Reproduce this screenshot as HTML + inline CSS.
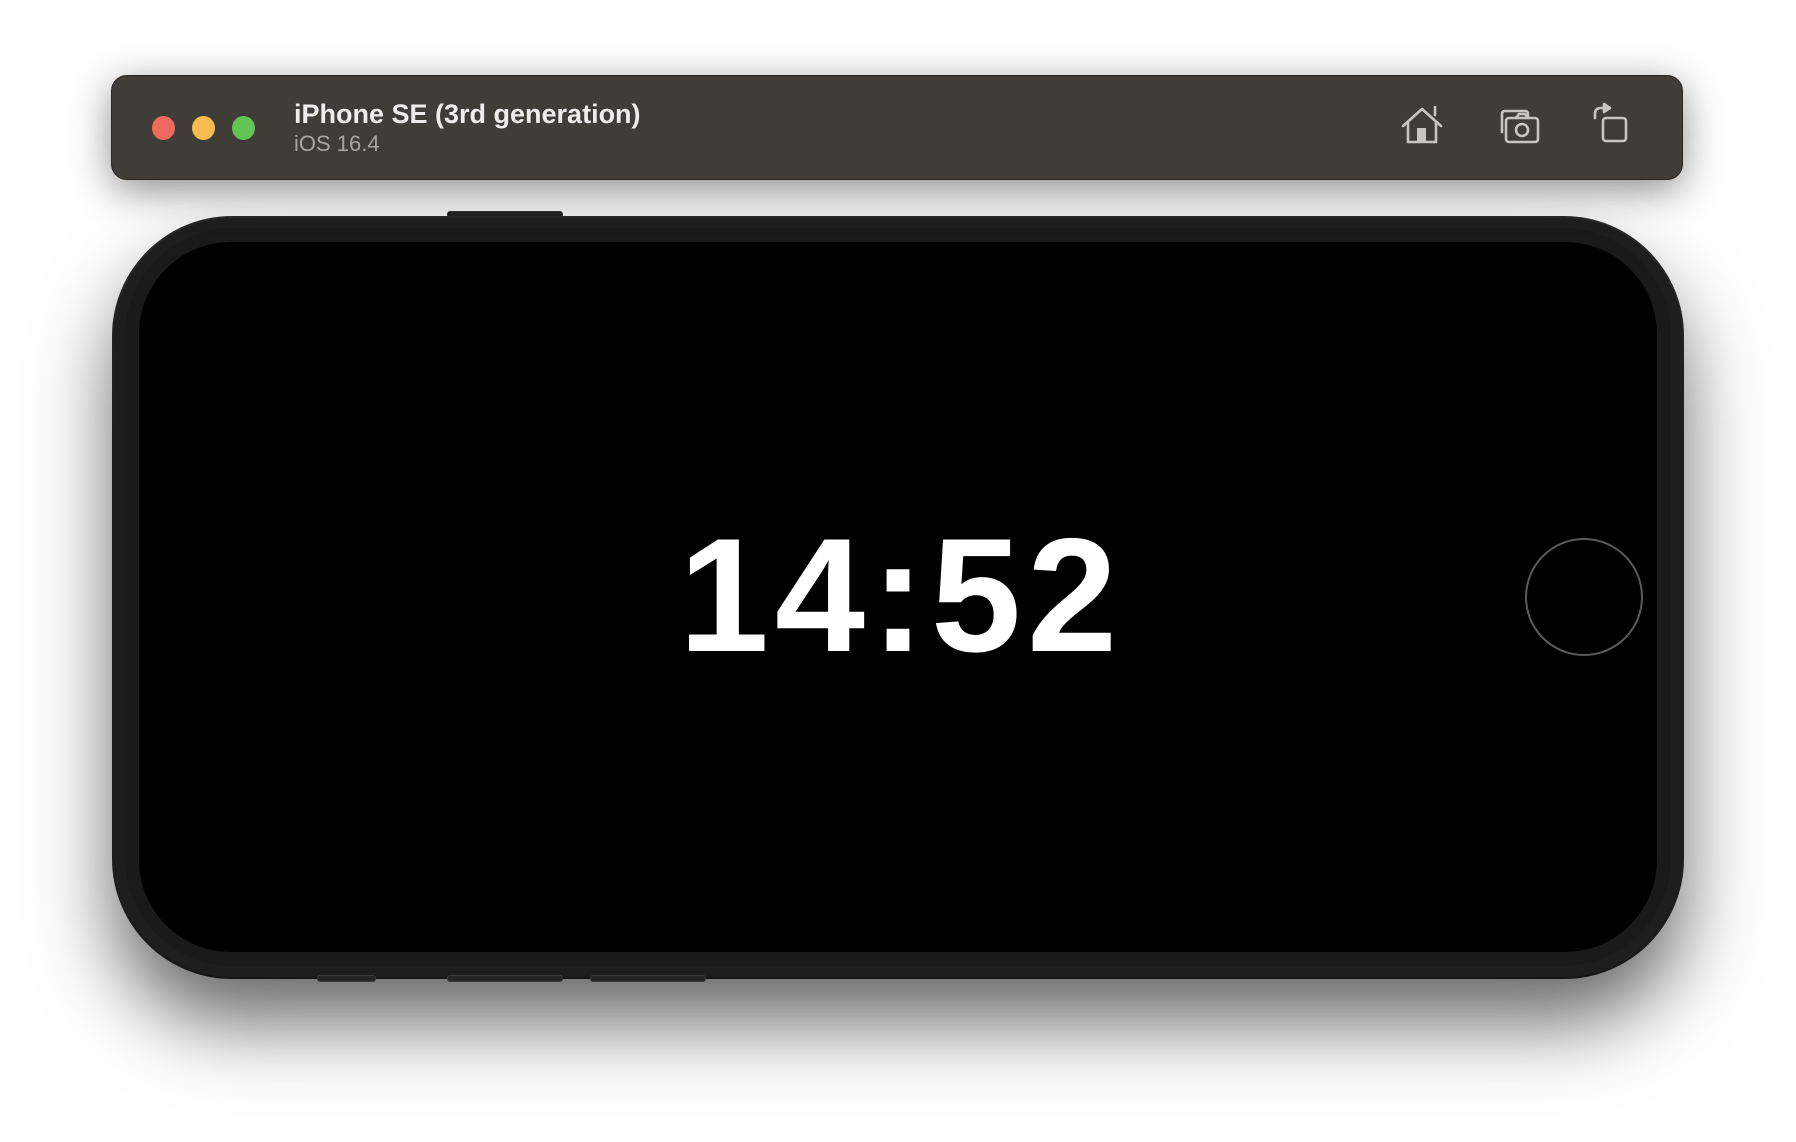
<!DOCTYPE html>
<html><head><meta charset="utf-8"><style>
html,body{margin:0;padding:0;background:#fff;width:1796px;height:1142px;overflow:hidden;font-family:"Liberation Sans",sans-serif}
.bar{position:absolute;left:111px;top:75px;width:1572px;height:105px;border-radius:16px;background:#403c38;box-shadow:0 10px 40px rgba(0,0,0,.45);border:1px solid #2a2826;box-sizing:border-box}
.dot{position:absolute;top:116px;width:23px;height:24px;border-radius:50%}
.t1{position:absolute;left:294px;top:99px;color:#efedeb;font-size:27px;font-weight:bold;white-space:nowrap}
.t2{position:absolute;left:294px;top:131px;color:#a9a49f;font-size:22px;white-space:nowrap}
.phone{position:absolute;left:114px;top:218px;width:1568px;height:759px;border-radius:118px;background:#1e1e1e;box-shadow:0 45px 80px rgba(0,0,0,.6),0 0 0 2px #2c2c2c}
.inner{position:absolute;left:125px;top:228px;width:1546px;height:738px;border-radius:108px;background:#1a1a1a}
.screen{position:absolute;left:139px;top:242px;width:1518px;height:710px;border-radius:92px;background:#000}
.btn{position:absolute;height:7px;background:#252525;border-radius:3px;border:1px solid #3a3a3a;box-sizing:border-box}
.clock{position:absolute;left:0;width:1796px;top:515px;text-align:center;color:#fff;font-size:162px;font-weight:bold;letter-spacing:6px;line-height:1;padding-left:6px;box-sizing:border-box}
.home{position:absolute;left:1525px;top:538px;width:118px;height:118px;border-radius:50%;border:2px solid #5a5a5a;box-sizing:border-box}
</style></head><body>
<div class="btn" style="left:447px;top:211px;width:116px"></div>
<div class="phone"></div>
<div class="inner"></div>
<div class="btn" style="left:317px;top:975px;width:59px"></div>
<div class="btn" style="left:447px;top:975px;width:116px"></div>
<div class="btn" style="left:590px;top:975px;width:116px"></div>
<div class="screen"></div>
<div class="clock">14:52</div>
<div class="home"></div>
<div class="bar"></div>
<div class="dot" style="left:152px;background:#ee6a5f"></div>
<div class="dot" style="left:192px;background:#f5be4f"></div>
<div class="dot" style="left:232px;background:#61c454"></div>
<div class="t1">iPhone SE (3rd generation)</div>
<div class="t2">iOS 16.4</div>
<svg style="position:absolute;left:1360px;top:70px" width="320" height="110" viewBox="0 0 320 110" fill="none" stroke="#c9c5c0" stroke-width="2.6" stroke-linecap="round" stroke-linejoin="round">
<path d="M43 56 L62 39 L81 56 M48 52 V72 H76 V52 M75 45 V37"/>
<rect x="57" y="58" width="9" height="14" fill="#c9c5c0" stroke="none"/>
<path d="M142 62 V44 Q142 41 145 41 H165 Q168 41 168 44 V46"/>
<rect x="146" y="48" width="32" height="24" rx="3"/>
<path d="M156 48 L159 44 H165 L168 48"/>
<circle cx="162" cy="60" r="6"/>
<rect x="243" y="48" width="23" height="23" rx="3"/>
<path d="M235 48 V44 Q235 38 241 38 H245"/>
<path d="M244 34 L250 38 L244 42 Z" fill="#c9c5c0"/>
</svg>
</body></html>
